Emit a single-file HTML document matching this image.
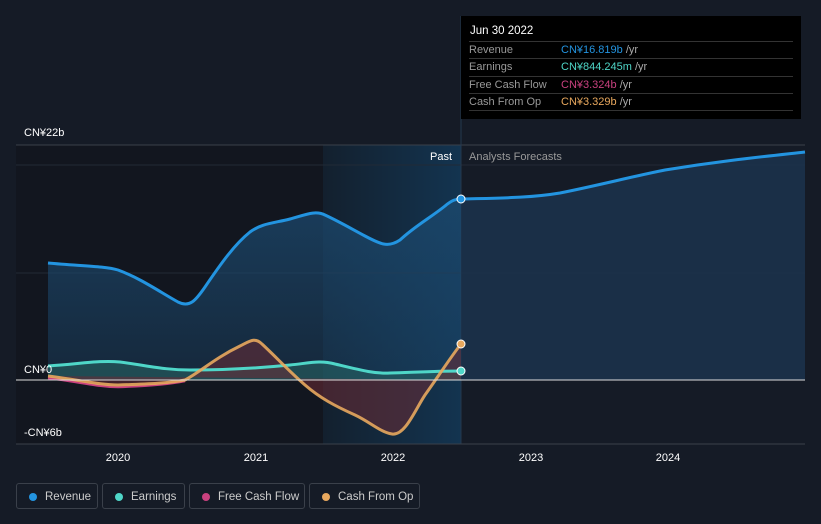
<!DOCTYPE html>
<html><head><meta charset="utf-8"><style>
body{margin:0;width:821px;height:524px;background:#151b26;font-family:"Liberation Sans","Noto Sans CJK SC",sans-serif;overflow:hidden;position:relative}
.tt{position:absolute;left:461px;top:16px;width:340px;height:103px;background:#000;color:#fff;font-size:11px}
.tt .h{position:absolute;left:9px;top:9px;font-size:11.5px}
.row{position:absolute;left:8px;width:324px;height:17px;border-top:1px solid #333;color:#999;line-height:17px}
.row span{position:absolute;left:92px}
.lg{position:absolute;top:483px;height:26px;border:1px solid #3a404a;border-radius:3px;color:#ccc;font-size:11.5px;line-height:26px;box-sizing:border-box}
.lg i{position:absolute;left:12px;top:9px;width:8px;height:8px;border-radius:50%}
.lg b{font-weight:normal;position:absolute;left:28px}
</style></head><body>
<svg width="821" height="524" style="position:absolute;left:0;top:0">
<defs>
<linearGradient id="pg" x1="0" x2="1"><stop offset="0" stop-color="#13202e"/><stop offset="1" stop-color="#133450"/></linearGradient>
<linearGradient id="rf" x1="0" y1="0" x2="0" y2="1"><stop offset="0" stop-color="#1c4a70" stop-opacity=".75"/><stop offset="1" stop-color="#1c4a70" stop-opacity=".35"/></linearGradient>
</defs>
<rect x="16" y="145" width="307" height="299" fill="#12161f"/>
<rect x="323" y="145" width="138" height="299" fill="url(#pg)"/>
<line x1="16" y1="145" x2="805" y2="145" stroke="#3a404a"/>
<line x1="16" y1="165" x2="805" y2="165" stroke="#222a36"/>
<line x1="16" y1="273" x2="805" y2="273" stroke="#222a36"/>
<line x1="461" y1="16" x2="461" y2="444" stroke="#24384e"/>
<path d="M48,263 C80,266 105,266 118,270 C140,278 160,292 178,302 C190,308 196,300 205,287 C222,262 235,244 250,232 C262,223 275,223 290,219 C305,215 315,210 325,215 C340,222 350,228 365,236 C380,244 388,248 400,240 C415,226 430,218 445,206 C452,200 456,199 461,199 L461,380 L48,380Z" fill="url(#rf)"/>
<path d="M461,199 C500,198 530,198 560,193 C600,185 630,177 665,170 C720,161 760,157 805,152 L805,380 L461,380Z" fill="#1b3550" opacity=".8"/>
<path d="M48,263 C80,266 105,266 118,270 C140,278 160,292 178,302 C190,308 196,300 205,287 C222,262 235,244 250,232 C262,223 275,223 290,219 C305,215 315,210 325,215 C340,222 350,228 365,236 C380,244 388,248 400,240 C415,226 430,218 445,206 C452,200 456,199 461,199 C500,198 530,198 560,193 C600,185 630,177 665,170 C720,161 760,157 805,152" fill="none" stroke="#2394e0" stroke-width="3"/>
<path d="M48,366 C80,364 100,360 120,362 C150,366 165,370 190,370 C230,370 260,368 290,365 C310,363 320,360 335,364 C360,370 375,374 390,373 C420,372 440,371 461,371 L461,380 L48,380Z" fill="#2a6d6a" opacity=".5"/>
<path d="M48,376 C80,380 100,385 118,385 C150,384 170,383 185,380 C200,372 215,358 240,346 C250,341 255,337 262,344 C275,356 290,372 305,385 C320,398 335,406 355,415 C370,422 380,432 392,434 C405,436 415,410 425,395 C440,374 450,358 461,344 L461,380 Z" fill="#6b2c35" opacity=".55"/>
<path d="M48,366 C80,364 100,360 120,362 C150,366 165,370 190,370 C230,370 260,368 290,365 C310,363 320,360 335,364 C360,370 375,374 390,373 C420,372 440,371 461,371" fill="none" stroke="#4fd6c8" stroke-width="3"/>
<path d="M48,378 C80,382 100,387 118,387 C150,386 170,384 185,381" fill="none" stroke="#c9417f" stroke-width="2.5"/>
<path d="M48,376 C80,380 100,385 118,385 C150,384 170,383 185,380 C200,372 215,358 240,346 C250,341 255,337 262,344 C275,356 290,372 305,385 C320,398 335,406 355,415 C370,422 380,432 392,434 C405,436 415,410 425,395 C440,374 450,358 461,344" fill="none" stroke="#e8a85e" stroke-width="3" opacity=".9"/>
<line x1="16" y1="380" x2="805" y2="380" stroke="#ddd" stroke-width="1"/>
<line x1="16" y1="444" x2="805" y2="444" stroke="#3a404a"/>
<circle cx="461" cy="199" r="4" fill="#2394e0" stroke="#fff" stroke-width="1"/>
<circle cx="461" cy="371" r="4" fill="#4fd6c8" stroke="#fff" stroke-width="1"/>
<circle cx="461" cy="344" r="4" fill="#e8a85e" stroke="#fff" stroke-width="1"/>
<g font-size="11" fill="#fff">
<text x="24" y="136">CN¥22b</text>
<text x="24" y="373">CN¥0</text>
<text x="24" y="436">-CN¥6b</text>
<text x="430" y="160">Past</text>
<text x="469" y="160" fill="#999">Analysts Forecasts</text>
<text x="118" y="461" text-anchor="middle">2020</text>
<text x="256" y="461" text-anchor="middle">2021</text>
<text x="393" y="461" text-anchor="middle">2022</text>
<text x="531" y="461" text-anchor="middle">2023</text>
<text x="668" y="461" text-anchor="middle">2024</text>
</g>
</svg>
<div class="tt"><div class="h">Jun 30 2022</div>
<div class="row" style="top:25px">Revenue<span style="color:#2394e0">CN¥16.819b <em style="font-style:normal;color:#aaa">/yr</em></span></div>
<div class="row" style="top:42px">Earnings<span style="color:#4fd6c8">CN¥844.245m <em style="font-style:normal;color:#aaa">/yr</em></span></div>
<div class="row" style="top:60px">Free Cash Flow<span style="color:#c9417f">CN¥3.324b <em style="font-style:normal;color:#aaa">/yr</em></span></div>
<div class="row" style="top:77px">Cash From Op<span style="color:#e8a85e">CN¥3.329b <em style="font-style:normal;color:#aaa">/yr</em></span></div>
<div class="row" style="top:94px;height:0"></div>
</div>
<div class="lg" style="left:16px;width:82px"><i style="background:#2394e0"></i><b>Revenue</b></div>
<div class="lg" style="left:102px;width:83px"><i style="background:#4fd6c8"></i><b>Earnings</b></div>
<div class="lg" style="left:189px;width:116px"><i style="background:#c9417f"></i><b>Free Cash Flow</b></div>
<div class="lg" style="left:309px;width:111px"><i style="background:#e8a85e"></i><b>Cash From Op</b></div>
</body></html>
